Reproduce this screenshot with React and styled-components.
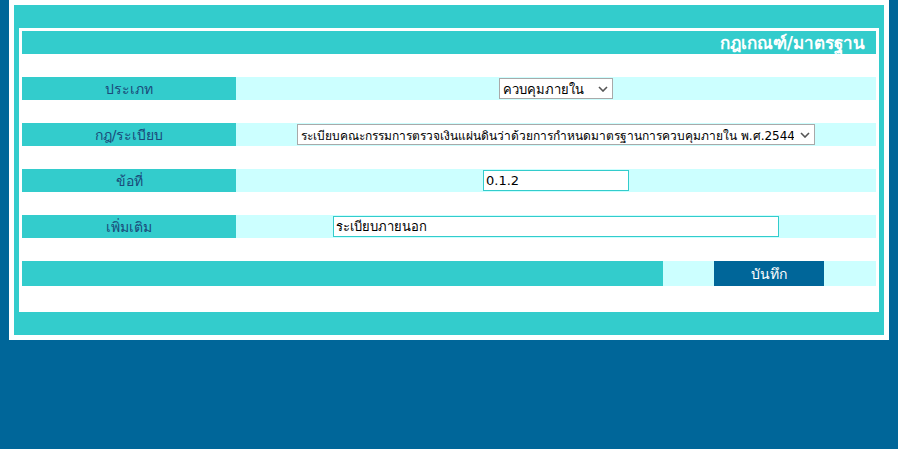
import styled, { createGlobalStyle } from "styled-components";

const GlobalStyle = createGlobalStyle`
  body {
    margin: 0;
    background: #006699;
    font-family: Tahoma, "DejaVu Sans", "Noto Sans", sans-serif;
  }
`;

const App = () => {
  return (
    <>
      <GlobalStyle />
      <Page>
        <Outer>
          <Frame>
            <Sheet>
              <TitleBar>กฎเกณฑ์/มาตรฐาน</TitleBar>

              <Row>
                <Label>ประเภท</Label>
                <Value>
                  <SelectBox width={114}>
                    <select defaultValue="in">
                      <option value="in">ควบคุมภายใน</option>
                    </select>
                    <Chevron />
                  </SelectBox>
                </Value>
              </Row>

              <Row>
                <Label>กฎ/ระเบียบ</Label>
                <Value>
                  <SelectBox width={518} small>
                    <select defaultValue="2544">
                      <option value="2544">
                        ระเบียบคณะกรรมการตรวจเงินแผ่นดินว่าด้วยการกำหนดมาตรฐานการควบคุมภายใน พ.ศ.2544
                      </option>
                    </select>
                    <Chevron />
                  </SelectBox>
                </Value>
              </Row>

              <Row>
                <Label>ข้อที่</Label>
                <Value>
                  <TextInput width={146} defaultValue="0.1.2" />
                </Value>
              </Row>

              <Row>
                <Label>เพิ่มเติม</Label>
                <Value>
                  <TextInput width={446} defaultValue="ระเบียบภายนอก" />
                </Value>
              </Row>

              <ActionRow>
                <ActionFill />
                <ActionCell>
                  <SaveButton>บันทึก</SaveButton>
                </ActionCell>
              </ActionRow>
            </Sheet>
          </Frame>
        </Outer>
      </Page>
    </>
  );
};

const Chevron = () => (
  <ChevronIcon width="10" height="6" viewBox="0 0 10 6">
    <path d="M1 1 L5 5 L9 1" fill="none" stroke="#555" strokeWidth="1.6" />
  </ChevronIcon>
);

export default App;

const Page = styled.div`
  padding-left: 9px;
  min-height: 449px;
`;

const Outer = styled.div`
  width: 870px;
  padding: 5px;
  background: #fff;
`;

const Frame = styled.div`
  background: #33cccc;
  padding: 23px 5px;
`;

const Sheet = styled.div`
  background: #fff;
  padding: 3px 3px 26px;
  display: flex;
  flex-direction: column;
  gap: 23px;
`;

const TitleBar = styled.div`
  height: 23px;
  background: #33cccc;
  color: #fff;
  font-size: 17px;
  font-weight: bold;
  line-height: 25px;
  text-align: right;
  padding-right: 11px;
  white-space: nowrap;
`;

const Row = styled.div`
  display: flex;
  height: 23px;
`;

const Label = styled.div`
  width: 214px;
  background: #33cccc;
  color: #1a4a7a;
  font-size: 14px;
  line-height: 25px;
  text-align: center;
`;

const Value = styled.div`
  flex: 1;
  background: #ccffff;
  display: flex;
  align-items: center;
  justify-content: center;
`;

const SelectBox = styled.div`
  position: relative;
  width: ${(p) => p.width}px;
  height: 21px;
  box-sizing: border-box;
  border: 1px solid #a9a9a9;
  background: #fff;

  select {
    appearance: none;
    width: 100%;
    height: 100%;
    border: none;
    outline: none;
    background: transparent;
    font-family: Tahoma, "DejaVu Sans", sans-serif;
    font-size: ${(p) => (p.small ? 12 : 13)}px;
    color: #000;
    padding: 0 20px 0 3px;
  }
`;

const ChevronIcon = styled.svg`
  position: absolute;
  right: 4px;
  top: 7px;
  pointer-events: none;
`;

const TextInput = styled.input`
  width: ${(p) => p.width}px;
  height: 21px;
  box-sizing: border-box;
  border: 1px solid #33cccc;
  outline: none;
  padding: 0 2px;
  font-family: Tahoma, "DejaVu Sans", sans-serif;
  font-size: 13px;
  color: #000;
`;

const ActionRow = styled.div`
  display: flex;
  height: 25px;
`;

const ActionFill = styled.div`
  width: 641px;
  background: #33cccc;
`;

const ActionCell = styled.div`
  flex: 1;
  background: #ccffff;
  display: flex;
  justify-content: center;
  padding-right: 1px;
`;

const SaveButton = styled.button`
  width: 110px;
  height: 25px;
  border: none;
  background: #006699;
  color: #fff;
  font-family: Tahoma, "DejaVu Sans", sans-serif;
  font-size: 14px;
  padding: 0;
  cursor: pointer;
`;
